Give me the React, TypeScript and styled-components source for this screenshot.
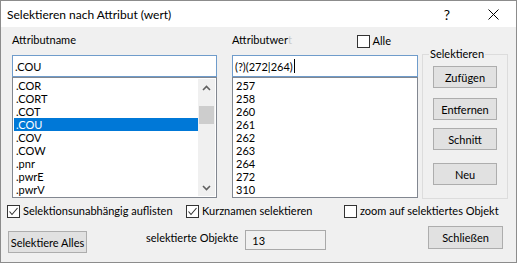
import React from "react";
import styled, { createGlobalStyle } from "styled-components";

const GlobalStyle = createGlobalStyle`
  html, body { margin: 0; padding: 0; background: #fff; }
  body {
    font-family: Lato, "Liberation Sans", sans-serif;
    font-size: 11px;
    color: #000;
    white-space: nowrap;
  }
`;

// Window frame
const Window = styled.div`
  width: 517px;
  height: 263px;
  box-sizing: border-box;
  border: 1px solid #8c8c8c;
  background: #f0f0f0;
  display: flex;
  flex-direction: column;
`;

const TitleBar = styled.div`
  height: 26px;
  background: #fff;
  display: flex;
  align-items: center;
  padding-left: 6px;
`;

const Title = styled.span`
  flex: 1;
  font-size: 12px;
`;

const CaptionButton = styled.div`
  width: 46px;
  height: 26px;
  display: flex;
  align-items: center;
  justify-content: center;
  font-size: 14px;
`;

const Body = styled.div`
  flex: 1;
  display: flex;
  flex-direction: column;
`;

const Main = styled.div`
  display: flex;
  padding-left: 11px;
`;

const Column = styled.div<{ $w: number; $ml?: number }>`
  width: ${(p) => p.$w}px;
  margin-left: ${(p) => p.$ml || 0}px;
  display: flex;
  flex-direction: column;
`;

const LabelRow = styled.div`
  height: 28px;
  box-sizing: border-box;
  padding-top: 5px;
  line-height: 16px;
  display: flex;
  align-items: flex-start;
`;

const Faded = styled.span`
  color: #c8c8c8;
`;

const AlleCheck = styled.label`
  margin-left: auto;
  margin-right: 27px;
  margin-top: 2px;
  display: flex;
  align-items: center;
  gap: 3px;
  line-height: 14px;
`;

const TextField = styled.div`
  height: 22px;
  box-sizing: border-box;
  border: 1px solid #6f9ccb;
  background: #fff;
  padding-left: 2px;
  display: flex;
  align-items: center;
  white-space: pre;
`;

const Caret = styled.span`
  display: inline-block;
  width: 1px;
  height: 14px;
  background: #000;
  margin-left: 1px;
`;

const ListBox = styled.div`
  height: 121px;
  box-sizing: border-box;
  border: 1px solid #828790;
  background: #fff;
  padding: 1px;
  display: flex;
`;

const Items = styled.div`
  flex: 1;
  display: flex;
  flex-direction: column;
`;

const Item = styled.div<{ $sel?: boolean }>`
  height: 13px;
  line-height: 13px;
  padding-left: 2px;
  background: ${(p) => (p.$sel ? "#0078d7" : "transparent")};
  color: ${(p) => (p.$sel ? "#fff" : "#000")};
`;

const ScrollBar = styled.div`
  width: 17px;
  background: #f0f0f0;
  display: flex;
  flex-direction: column;
`;

const ScrollArrow = styled.div`
  height: 17px;
  display: flex;
  align-items: center;
  justify-content: center;
`;

const Track = styled.div`
  flex: 1;
  padding-top: 10px;
`;

const Thumb = styled.div`
  height: 18px;
  margin: 0 1px;
  background: #cdcdcd;
`;

const Group = styled.fieldset`
  margin: 19px 0 0 0;
  padding: 0;
  height: 153px;
  box-sizing: border-box;
  border: 1px solid #dcdcdc;
  display: flex;
  flex-direction: column;
`;

const Legend = styled.legend`
  margin-left: 6px;
  padding: 0 1px;
  line-height: 16px;
`;

const Button = styled.div<{ $w: number; $h?: number; $mt?: number; $ml?: number }>`
  width: ${(p) => p.$w}px;
  height: ${(p) => p.$h || 22}px;
  margin-top: ${(p) => p.$mt || 0}px;
  margin-left: ${(p) => p.$ml || 0}px;
  box-sizing: border-box;
  background: #e1e1e1;
  border: 1px solid #adadad;
  display: flex;
  align-items: center;
  justify-content: center;
  flex-shrink: 0;
`;

const CheckRow = styled.div`
  display: grid;
  grid-template-columns: 179px 158px auto;
  margin-top: 5px;
  padding-left: 6px;
  height: 14px;
`;

const CheckItem = styled.label`
  display: flex;
  align-items: center;
  gap: 3px;
  line-height: 14px;
`;

const BottomRow = styled.div`
  display: flex;
  align-items: flex-start;
  margin-top: 8px;
  padding-left: 7px;
  padding-right: 13px;
`;

const Caption = styled.span<{ $mt: number; $ml: number }>`
  margin-top: ${(p) => p.$mt}px;
  margin-left: ${(p) => p.$ml}px;
  line-height: 16px;
`;

const CountField = styled.div`
  width: 81px;
  height: 20px;
  margin-top: 4px;
  margin-left: 7px;
  box-sizing: border-box;
  border: 1px solid #a9a9a9;
  background: #f0f0f0;
  padding-left: 6px;
  display: flex;
  align-items: center;
`;

const Spacer = styled.div`
  flex: 1;
`;

const CheckBox = ({ checked }: { checked?: boolean }) => (
  <svg width="13" height="13" viewBox="0 0 13 13">
    <rect x="0.5" y="0.5" width="12" height="12" fill="#fff" stroke="#333" />
    {checked && (
      <path d="M2.5 6.5 L5 9.5 L10.5 3" fill="none" stroke="#333" strokeWidth="1.1" />
    )}
  </svg>
);

const Chevron = ({ up }: { up?: boolean }) => (
  <svg width="9" height="6" viewBox="0 0 9 6">
    <path
      d={up ? "M1 5 L4.5 1.5 L8 5" : "M1 1 L4.5 4.5 L8 1"}
      fill="none"
      stroke="#606060"
      strokeWidth="1.6"
    />
  </svg>
);

const names = [".COR", ".CORT", ".COT", ".COU", ".COV", ".COW", ".pnr", ".pwrE", ".pwrV"];
const values = ["257", "258", "260", "261", "262", "263", "264", "272", "310"];

const App = () => {
  return (
    <>
      <GlobalStyle />
      <Window>
        <TitleBar>
          <Title>Selektieren nach Attribut (wert)</Title>
          <CaptionButton>?</CaptionButton>
          <CaptionButton>
            <svg width="11" height="11" viewBox="0 0 11 11">
              <path d="M0.5 0.5 L10.5 10.5 M10.5 0.5 L0.5 10.5" stroke="#000" strokeWidth="1" />
            </svg>
          </CaptionButton>
        </TitleBar>
        <Body>
          <Main>
            <Column $w={205}>
              <LabelRow>Attributname</LabelRow>
              <TextField>.COU</TextField>
              <ListBox>
                <Items>
                  {names.map((n) => (
                    <Item key={n} $sel={n === ".COU"}>
                      {n}
                    </Item>
                  ))}
                </Items>
                <ScrollBar>
                  <ScrollArrow>
                    <Chevron up />
                  </ScrollArrow>
                  <Track>
                    <Thumb />
                  </Track>
                  <ScrollArrow>
                    <Chevron />
                  </ScrollArrow>
                </ScrollBar>
              </ListBox>
            </Column>
            <Column $w={186} $ml={15}>
              <LabelRow>
                <span>
                  Attributwer<Faded>t</Faded>
                </span>
                <AlleCheck>
                  <CheckBox />
                  Alle
                </AlleCheck>
              </LabelRow>
              <TextField>
                (?)(272|264)
                <Caret />
              </TextField>
              <ListBox>
                <Items>
                  {values.map((v) => (
                    <Item key={v}>{v}</Item>
                  ))}
                </Items>
              </ListBox>
            </Column>
            <Column $w={86} $ml={4}>
              <Group>
                <Legend>Selektieren</Legend>
                <Button $w={64} $mt={4} $ml={10}>Zufügen</Button>
                <Button $w={64} $mt={10} $ml={10}>Entfernen</Button>
                <Button $w={64} $mt={8} $ml={10}>Schnitt</Button>
                <Button $w={64} $mt={13} $ml={10}>Neu</Button>
              </Group>
            </Column>
          </Main>
          <CheckRow>
            <CheckItem>
              <CheckBox checked />
              Selektionsunabhängig auflisten
            </CheckItem>
            <CheckItem>
              <CheckBox checked />
              Kurznamen selektieren
            </CheckItem>
            <CheckItem>
              <CheckBox />
              zoom auf selektiertes Objekt
            </CheckItem>
          </CheckRow>
          <BottomRow>
            <Button $w={79} $mt={5}>Selektiere Alles</Button>
            <Caption $mt={4} $ml={59}>selektierte Objekte</Caption>
            <CountField>13</CountField>
            <Spacer />
            <Button $w={75} $h={23}>Schließen</Button>
          </BottomRow>
        </Body>
      </Window>
    </>
  );
};

export default App;
